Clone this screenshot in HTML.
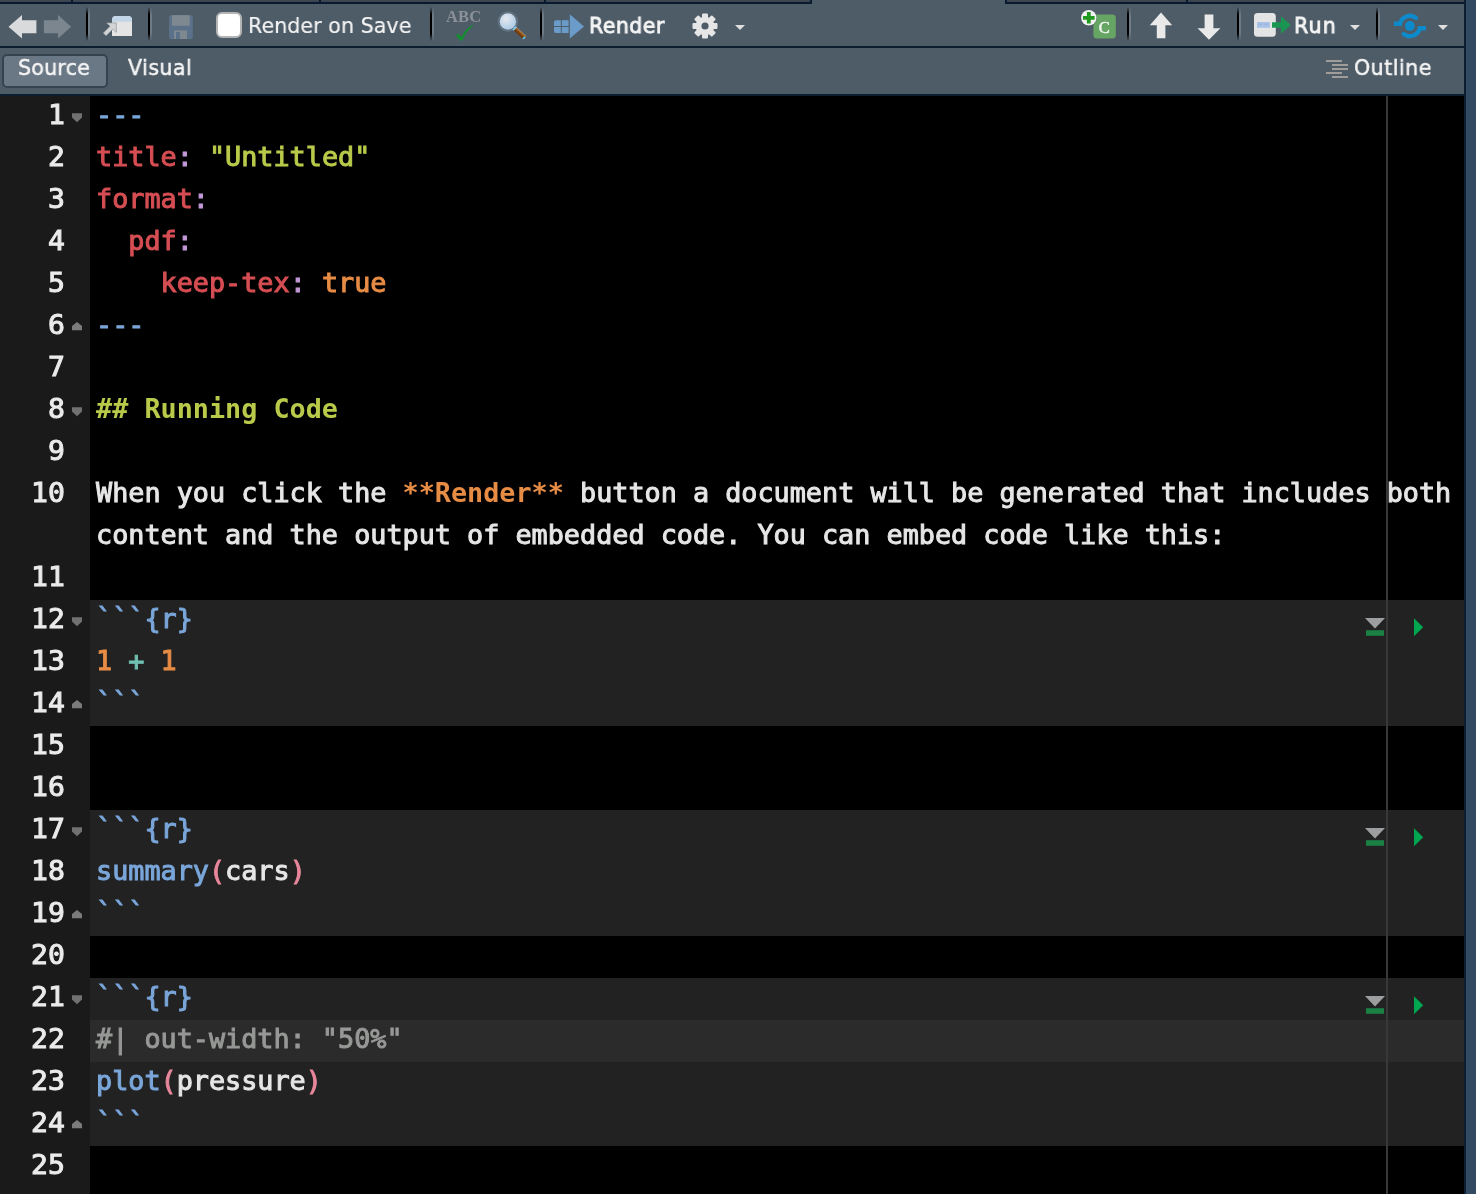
<!DOCTYPE html>
<html>
<head>
<meta charset="utf-8">
<title>Untitled.qmd</title>
<style>
html,body{margin:0;padding:0;}
body{width:1476px;height:1194px;overflow:hidden;background:#000;position:relative;
  font-family:"DejaVu Sans Condensed","Liberation Sans",sans-serif;}
.abs{position:absolute;}
.ui,.mono,.gs{will-change:transform;}
#chrome{left:0;top:0;width:1464px;height:96px;background:#4e5c68;}
#strip1{left:0;top:0;width:810px;height:2px;background:#3d4650;border-bottom:2px solid #081a2e;border-right:2px solid #081a2e;}
#strip2{left:1005px;top:0;width:459px;height:2px;background:#3d4650;border-bottom:2px solid #081a2e;border-left:2px solid #081a2e;box-sizing:border-box;height:4px;}
.tabmark{top:0;width:2px;height:2px;background:#081a2e;}
.hline{left:0;width:1464px;height:2px;background:#0c1d30;}
#rband{left:1464px;top:0;width:12px;height:1194px;background:#334b62;border-left:2px solid #0c1f31;box-sizing:border-box;}
.sep{top:7px;width:2px;height:34px;background:linear-gradient(to bottom,rgba(0,0,0,0) 0,#000 22%,#000 78%,rgba(0,0,0,0) 100%);}
.sep:after{content:"";position:absolute;left:2px;top:0;width:2px;height:34px;background:linear-gradient(to bottom,rgba(111,123,134,0) 0,#6f7b86 25%,#6f7b86 75%,rgba(111,123,134,0) 100%);}
.ui{color:#f4f4f4;font-family:"DejaVu Sans","Liberation Sans",sans-serif;font-size:22px;transform:scaleX(0.935);transform-origin:0 0;-webkit-text-stroke:0.2px;white-space:pre;line-height:26px;}
.dd{width:0;height:0;border-left:5.5px solid transparent;border-right:5.5px solid transparent;border-top:5.5px solid #dedede;}
/* editor */
#gutter{left:0;top:96px;width:90px;height:1098px;background:#1a1a1a;}
#editor{left:90px;top:96px;width:1374px;height:1098px;background:#000;overflow:hidden;}
.chunk{left:0;width:1374px;background:#222222;}
.active{left:0;width:1374px;height:42px;background:#2b2b2b;}
#pmargin{left:1296px;top:0;width:2px;height:1098px;background:#383838;}
.mono{font-family:"DejaVu Sans Mono","Liberation Mono",monospace;font-size:26.8px;line-height:42px;white-space:pre;-webkit-text-stroke:1px;}
.ln{left:0;width:65px;height:42px;text-align:right;color:#ebebeb;transform:scaleX(1.05);transform-origin:100% 0;}
.row{left:6px;height:42px;color:#e6e6e6;}
.row span,.ln span{position:relative;top:-2px;}
.b{font-weight:bold;-webkit-text-stroke:0;}
.red{color:#d54e53}.pur{color:#c397d8}.grn{color:#b9ca4a}.org{color:#e78c45}.blu{color:#7aa6da}.aqu{color:#70c0b1}.cmt{color:#969896}.pnk{color:#e8879c}
</style>
</head>
<body>
<div id="chrome" class="abs"></div>
<div id="strip1" class="abs"></div>
<div id="strip2" class="abs"></div>
<div class="abs tabmark" style="left:71px"></div>
<div class="abs tabmark" style="left:319px"></div>
<div class="abs tabmark" style="left:544px"></div>
<div class="abs tabmark" style="left:1186px"></div>
<div class="abs hline" style="top:46px"></div>
<div class="abs hline" style="top:94px"></div>
<div id="rband" class="abs"></div>

<!-- back / forward -->
<svg class="abs" style="left:6px;top:12px" width="70" height="30" viewBox="0 0 70 30">
  <polygon points="2.5,14.8 16,3 16,8.2 30.4,8.2 30.4,21.3 16,21.3 16,26.6" fill="#d9dadb"/>
  <polygon points="65.1,14.8 52.1,3 52.1,8.2 37.9,8.2 37.9,21.3 52.1,21.3 52.1,26.6" fill="#7b868f"/>
</svg>
<div class="abs sep" style="left:86px"></div>
<!-- show in new window -->
<svg class="abs" style="left:102px;top:14px" width="34" height="26" viewBox="0 0 34 26">
  <path d="M10,22 V6 a4,4 0 0 1 4,-4 h12 a4,4 0 0 1 4,4 V22 Z" fill="#e4e4e4"/>
  <path d="M10,7.7 V6 a4,4 0 0 1 4,-4 h12 a4,4 0 0 1 4,4 V7.7 Z" fill="#c3d6e8"/>
  <path d="M4.6,8.9 L14.3,8.9 L14.3,18.4 L10.9,15 L4.1,21.8 L1.3,19 L8.1,12.2 Z" fill="#d3d4d5" stroke="#8e959b" stroke-width="0.7" stroke-linejoin="round"/>
</svg>
<div class="abs sep" style="left:148px"></div>
<!-- save (disabled) -->
<svg class="abs" style="left:168px;top:14px" width="26" height="26" viewBox="0 0 26 26">
  <rect x="1" y="1.2" width="23.8" height="23.8" rx="2" fill="#5a7189"/>
  <rect x="4" y="1.2" width="17.7" height="10.6" fill="#7e8891"/>
  <rect x="6" y="16.4" width="13" height="8.6" fill="#7e8891"/>
  <rect x="8" y="18" width="3.8" height="7" fill="#5a7189"/>
</svg>
<!-- checkbox -->
<div class="abs" style="left:216px;top:12px;width:26px;height:26px;box-sizing:border-box;border:2px solid #b4b4b4;border-radius:6px;background:#fff"></div>
<div class="abs ui" style="left:247.5px;top:12.7px;letter-spacing:0.08px">Render on Save</div>
<div class="abs sep" style="left:430px"></div>
<!-- spell check -->
<div class="abs gs" style="left:446px;top:6px;font-family:'Liberation Serif',serif;font-weight:bold;font-size:16.5px;line-height:22px;color:#8b9199;letter-spacing:0.2px">ABC</div>
<svg class="abs" style="left:454px;top:23px" width="22" height="19" viewBox="0 0 22 19">
  <path d="M2,12.5 L4.2,10.6 L7.4,14.2 C9.5,9.5 13,5 18.3,2 L19,2.8 C14,7 10.8,12 8.2,17.5 L6.2,17.5 Z" fill="#12902e"/>
</svg>
<!-- find -->
<svg class="abs" style="left:494px;top:8px" width="36" height="36" viewBox="0 0 36 36">
  <defs><radialGradient id="lens" cx="0.38" cy="0.32" r="0.75"><stop offset="0" stop-color="#e6eaef"/><stop offset="1" stop-color="#a9c8e6"/></radialGradient>
  <linearGradient id="hand" x1="0" y1="1" x2="0" y2="0"><stop offset="0.25" stop-color="#6f3a08"/><stop offset="0.6" stop-color="#8d5218"/><stop offset="1" stop-color="#bd8e5c"/></linearGradient></defs>
  <g transform="rotate(43 21 20.6)">
    <rect x="21" y="18.4" width="13.6" height="4.4" fill="url(#hand)"/>
    <rect x="19.6" y="18.2" width="1.9" height="4.8" fill="#7fc6ea"/>
    <rect x="33" y="19.8" width="1.8" height="3" fill="#55c1f0"/>
  </g>
  <circle cx="13.9" cy="13.45" r="9.3" fill="none" stroke="#a9cbe2" stroke-opacity="0.22" stroke-width="1.8"/>
  <circle cx="13.9" cy="13.45" r="8.2" fill="url(#lens)"/>
</svg>
<div class="abs sep" style="left:540px"></div>
<!-- render -->
<svg class="abs" style="left:552px;top:13px" width="34" height="27" viewBox="0 0 34 27">
  <g fill="#6a9bc9">
  <path d="M2,9.2 a2,2 0 0 1 2,-2 H8.8 V13 H2 Z"/>
  <rect x="9.8" y="7.2" width="6.8" height="5.8"/>
  <path d="M2,14 H8.8 V20 H4 a2,2 0 0 1 -2,-2 Z"/>
  <rect x="9.8" y="14" width="6.8" height="6"/>
  <polygon points="17.8,1.2 32,13.5 17.8,25.6"/>
  </g>
</svg>
<div class="abs ui" style="left:588.7px;top:12.7px;letter-spacing:0.43px;-webkit-text-stroke:0.9px">Render</div>
<!-- gear -->
<svg class="abs" style="left:691.4px;top:11.6px" width="28" height="28" viewBox="-14 -14 28 28">
  <g fill="#e6e6e6">
    <g id="teeth">
      <rect x="-3" y="-12.5" width="6" height="25" rx="1"/>
      <rect x="-3" y="-12.5" width="6" height="25" rx="1" transform="rotate(45)"/>
      <rect x="-3" y="-12.5" width="6" height="25" rx="1" transform="rotate(90)"/>
      <rect x="-3" y="-12.5" width="6" height="25" rx="1" transform="rotate(135)"/>
    </g>
    <circle r="9.3"/>
  </g>
  <circle r="3.6" fill="#4e5c68"/>
</svg>
<div class="abs dd" style="left:734.5px;top:25px"></div>

<!-- insert chunk -->
<svg class="abs gs" style="left:1078px;top:8px" width="40" height="33" viewBox="0 0 40 33">
  <rect x="15.4" y="6.6" width="22.4" height="23.8" rx="3.5" fill="#66a563"/>
  <text x="26.2" y="25.2" text-anchor="middle" font-family="Liberation Serif, serif" font-size="16.5" fill="#eef4ee" stroke="#eef4ee" stroke-width="0.5">C</text>
  <circle cx="10.8" cy="10" r="8.2" fill="#2d3a45" opacity="0.35"/>
  <circle cx="10.8" cy="9.8" r="7.7" fill="#f2f2f2"/>
  <path d="M8.9,4 h3.8 v3.9 h3.9 v3.8 h-3.9 v3.9 h-3.8 v-3.9 h-3.9 v-3.8 h3.9 Z" fill="#1f9a1c"/>
</svg>
<div class="abs sep" style="left:1127px"></div>
<!-- up / down -->
<svg class="abs" style="left:1146px;top:10px" width="80" height="32" viewBox="0 0 80 32">
  <polygon points="15,2.6 26.2,15.2 19.4,15.2 19.4,28.2 10.8,28.2 10.8,15.2 3.8,15.2" fill="#e9e9e9"/>
  <polygon points="63,29.8 74.4,18.2 67.4,18.2 67.4,4.6 58.6,4.6 58.6,18.2 51.6,18.2" fill="#e9e9e9"/>
</svg>
<div class="abs sep" style="left:1237px"></div>
<!-- run -->
<svg class="abs" style="left:1252px;top:11px" width="42" height="28" viewBox="0 0 42 28">
  <rect x="2" y="2" width="21.8" height="23.8" rx="3.5" fill="#e4e4e4"/>
  <rect x="5" y="11" width="13" height="5.8" fill="#a9c3e8"/>
  <path d="M7,13.2 h3.5 M12.5,13.2 h3.5" stroke="#9ab4da" stroke-width="1.6"/>
  <polygon points="20,11.2 29,11.2 29,5.3 38.8,14 29,22.7 29,16.8 20,16.8" fill="#1b9652"/>
</svg>
<div class="abs ui" style="left:1293.8px;top:12.7px;letter-spacing:1.28px;-webkit-text-stroke:0.9px">Run</div>
<div class="abs dd" style="left:1349.5px;top:25px"></div>
<div class="abs sep" style="left:1376px"></div>
<!-- publish -->
<svg class="abs" style="left:1392px;top:10px" width="36" height="32" viewBox="0 0 36 32">
  <g fill="none" stroke="#0d8acb" stroke-width="4.3">
    <path d="M2,13.75 H8 A10.15,10.15 0 0 1 24.15,8"/>
    <path d="M34,18.25 H27.8 A10.15,10.15 0 0 1 11.65,24"/>
  </g>
  <circle cx="24.15" cy="8" r="2.1" fill="#0d8acb"/>
  <circle cx="11.65" cy="24" r="2.1" fill="#0d8acb"/>
  <circle cx="17.9" cy="16" r="4.9" fill="#0d8acb"/>
</svg>
<div class="abs dd" style="left:1437.5px;top:25px"></div>

<div class="abs" style="left:2px;top:54px;width:106px;height:34px;box-sizing:border-box;border:2px solid #33434f;border-radius:5px;background:#6a7785"></div>
<div class="abs ui" style="left:17.6px;top:54.7px;letter-spacing:0.24px;-webkit-text-stroke:0.5px">Source</div>
<div class="abs ui" style="left:128.2px;top:54.7px;letter-spacing:0.49px;-webkit-text-stroke:0.5px">Visual</div>
<svg class="abs" style="left:1324px;top:58px" width="26" height="22" viewBox="0 0 26 22">
  <g fill="#9f9c99">
  <rect x="2" y="2" width="16" height="2"/>
  <rect x="8" y="6" width="16" height="2"/>
  <rect x="8" y="10" width="16" height="2"/>
  <rect x="2" y="14" width="16" height="2"/>
  <rect x="8" y="18" width="16" height="2"/>
  </g>
</svg>
<div class="abs ui" style="left:1354px;top:54.7px;letter-spacing:0.53px;-webkit-text-stroke:0.5px">Outline</div>


<div id="gutter" class="abs">
<div class="abs ln mono" style="top:0px"><span>1</span></div>
<svg class="abs" style="left:71px;top:17px" width="12" height="12" viewBox="0 0 12 12"><polygon points="1,0.3 11,0.3 11,4.6 6,9.2 1,4.6" fill="#717171"/></svg>
<div class="abs ln mono" style="top:42px"><span>2</span></div>
<div class="abs ln mono" style="top:84px"><span>3</span></div>
<div class="abs ln mono" style="top:126px"><span>4</span></div>
<div class="abs ln mono" style="top:168px"><span>5</span></div>
<div class="abs ln mono" style="top:210px"><span>6</span></div>
<svg class="abs" style="left:71px;top:225px" width="12" height="12" viewBox="0 0 12 12"><polygon points="6,0.9 11,5 11,9.3 1,9.3 1,5" fill="#7b7b7b"/></svg>
<div class="abs ln mono" style="top:252px"><span>7</span></div>
<div class="abs ln mono" style="top:294px"><span>8</span></div>
<svg class="abs" style="left:71px;top:311px" width="12" height="12" viewBox="0 0 12 12"><polygon points="1,0.3 11,0.3 11,4.6 6,9.2 1,4.6" fill="#717171"/></svg>
<div class="abs ln mono" style="top:336px"><span>9</span></div>
<div class="abs ln mono" style="top:378px"><span>10</span></div>
<div class="abs ln mono" style="top:462px"><span>11</span></div>
<div class="abs ln mono" style="top:504px"><span>12</span></div>
<svg class="abs" style="left:71px;top:521px" width="12" height="12" viewBox="0 0 12 12"><polygon points="1,0.3 11,0.3 11,4.6 6,9.2 1,4.6" fill="#717171"/></svg>
<div class="abs ln mono" style="top:546px"><span>13</span></div>
<div class="abs ln mono" style="top:588px"><span>14</span></div>
<svg class="abs" style="left:71px;top:603px" width="12" height="12" viewBox="0 0 12 12"><polygon points="6,0.9 11,5 11,9.3 1,9.3 1,5" fill="#7b7b7b"/></svg>
<div class="abs ln mono" style="top:630px"><span>15</span></div>
<div class="abs ln mono" style="top:672px"><span>16</span></div>
<div class="abs ln mono" style="top:714px"><span>17</span></div>
<svg class="abs" style="left:71px;top:731px" width="12" height="12" viewBox="0 0 12 12"><polygon points="1,0.3 11,0.3 11,4.6 6,9.2 1,4.6" fill="#717171"/></svg>
<div class="abs ln mono" style="top:756px"><span>18</span></div>
<div class="abs ln mono" style="top:798px"><span>19</span></div>
<svg class="abs" style="left:71px;top:813px" width="12" height="12" viewBox="0 0 12 12"><polygon points="6,0.9 11,5 11,9.3 1,9.3 1,5" fill="#7b7b7b"/></svg>
<div class="abs ln mono" style="top:840px"><span>20</span></div>
<div class="abs ln mono" style="top:882px"><span>21</span></div>
<svg class="abs" style="left:71px;top:899px" width="12" height="12" viewBox="0 0 12 12"><polygon points="1,0.3 11,0.3 11,4.6 6,9.2 1,4.6" fill="#717171"/></svg>
<div class="abs ln mono" style="top:924px"><span>22</span></div>
<div class="abs ln mono" style="top:966px"><span>23</span></div>
<div class="abs ln mono" style="top:1008px"><span>24</span></div>
<svg class="abs" style="left:71px;top:1023px" width="12" height="12" viewBox="0 0 12 12"><polygon points="6,0.9 11,5 11,9.3 1,9.3 1,5" fill="#7b7b7b"/></svg>
<div class="abs ln mono" style="top:1050px"><span>25</span></div>
</div>
<div id="editor" class="abs">
<div class="abs chunk" style="top:504px;height:126px"></div>
<div class="abs chunk" style="top:714px;height:126px"></div>
<div class="abs chunk" style="top:882px;height:168px"></div>
<div class="abs active" style="top:924px"></div>
<div class="abs row mono" style="top:0px"><span class="blu">---</span></div>
<div class="abs row mono" style="top:42px"><span class="red">title</span><span class="pur">:</span><span class="pl"> </span><span class="grn">"Untitled"</span></div>
<div class="abs row mono" style="top:84px"><span class="red">format</span><span class="pur">:</span></div>
<div class="abs row mono" style="top:126px"><span class="pl">  </span><span class="red">pdf</span><span class="pur">:</span></div>
<div class="abs row mono" style="top:168px"><span class="pl">    </span><span class="red">keep-tex</span><span class="pur">:</span><span class="pl"> </span><span class="org">true</span></div>
<div class="abs row mono" style="top:210px"><span class="blu">---</span></div>
<div class="abs row mono" style="top:294px"><span class="grn b">## Running Code</span></div>
<div class="abs row mono" style="top:378px"><span class="pl">When you click the </span><span class="org b">**Render**</span><span class="pl"> button a document will be generated that includes both</span></div>
<div class="abs row mono" style="top:420px"><span class="pl">content and the output of embedded code. You can embed code like this:</span></div>
<div class="abs row mono" style="top:504px"><span class="blu">```{r}</span></div>
<div class="abs row mono" style="top:546px"><span class="org">1</span><span class="pl"> </span><span class="aqu">+</span><span class="pl"> </span><span class="org">1</span></div>
<div class="abs row mono" style="top:588px"><span class="blu">```</span></div>
<div class="abs row mono" style="top:714px"><span class="blu">```{r}</span></div>
<div class="abs row mono" style="top:756px"><span class="blu">summary</span><span class="pnk">(</span><span class="pl">cars</span><span class="pnk">)</span></div>
<div class="abs row mono" style="top:798px"><span class="blu">```</span></div>
<div class="abs row mono" style="top:882px"><span class="blu">```{r}</span></div>
<div class="abs row mono" style="top:924px"><span class="cmt">#| out-width: "50%"</span></div>
<div class="abs row mono" style="top:966px"><span class="blu">plot</span><span class="pnk">(</span><span class="pl">pressure</span><span class="pnk">)</span></div>
<div class="abs row mono" style="top:1008px"><span class="blu">```</span></div>
<div id="pmargin" class="abs"></div>
<svg class="abs" style="left:1274px;top:521px" width="22" height="20" viewBox="0 0 22 20"><polygon points="1,1 21,1 11,11.5" fill="#9c9ea0"/><rect x="2" y="13.2" width="18" height="5.6" fill="#1a8044"/></svg>
<svg class="abs" style="left:1323px;top:521px" width="12" height="20" viewBox="0 0 12 20"><polygon points="1,1.3 10.2,10.2 1,19.2" fill="#00a650"/></svg>
<svg class="abs" style="left:1274px;top:731px" width="22" height="20" viewBox="0 0 22 20"><polygon points="1,1 21,1 11,11.5" fill="#9c9ea0"/><rect x="2" y="13.2" width="18" height="5.6" fill="#1a8044"/></svg>
<svg class="abs" style="left:1323px;top:731px" width="12" height="20" viewBox="0 0 12 20"><polygon points="1,1.3 10.2,10.2 1,19.2" fill="#00a650"/></svg>
<svg class="abs" style="left:1274px;top:899px" width="22" height="20" viewBox="0 0 22 20"><polygon points="1,1 21,1 11,11.5" fill="#9c9ea0"/><rect x="2" y="13.2" width="18" height="5.6" fill="#1a8044"/></svg>
<svg class="abs" style="left:1323px;top:899px" width="12" height="20" viewBox="0 0 12 20"><polygon points="1,1.3 10.2,10.2 1,19.2" fill="#00a650"/></svg>
</div>
</body>
</html>
